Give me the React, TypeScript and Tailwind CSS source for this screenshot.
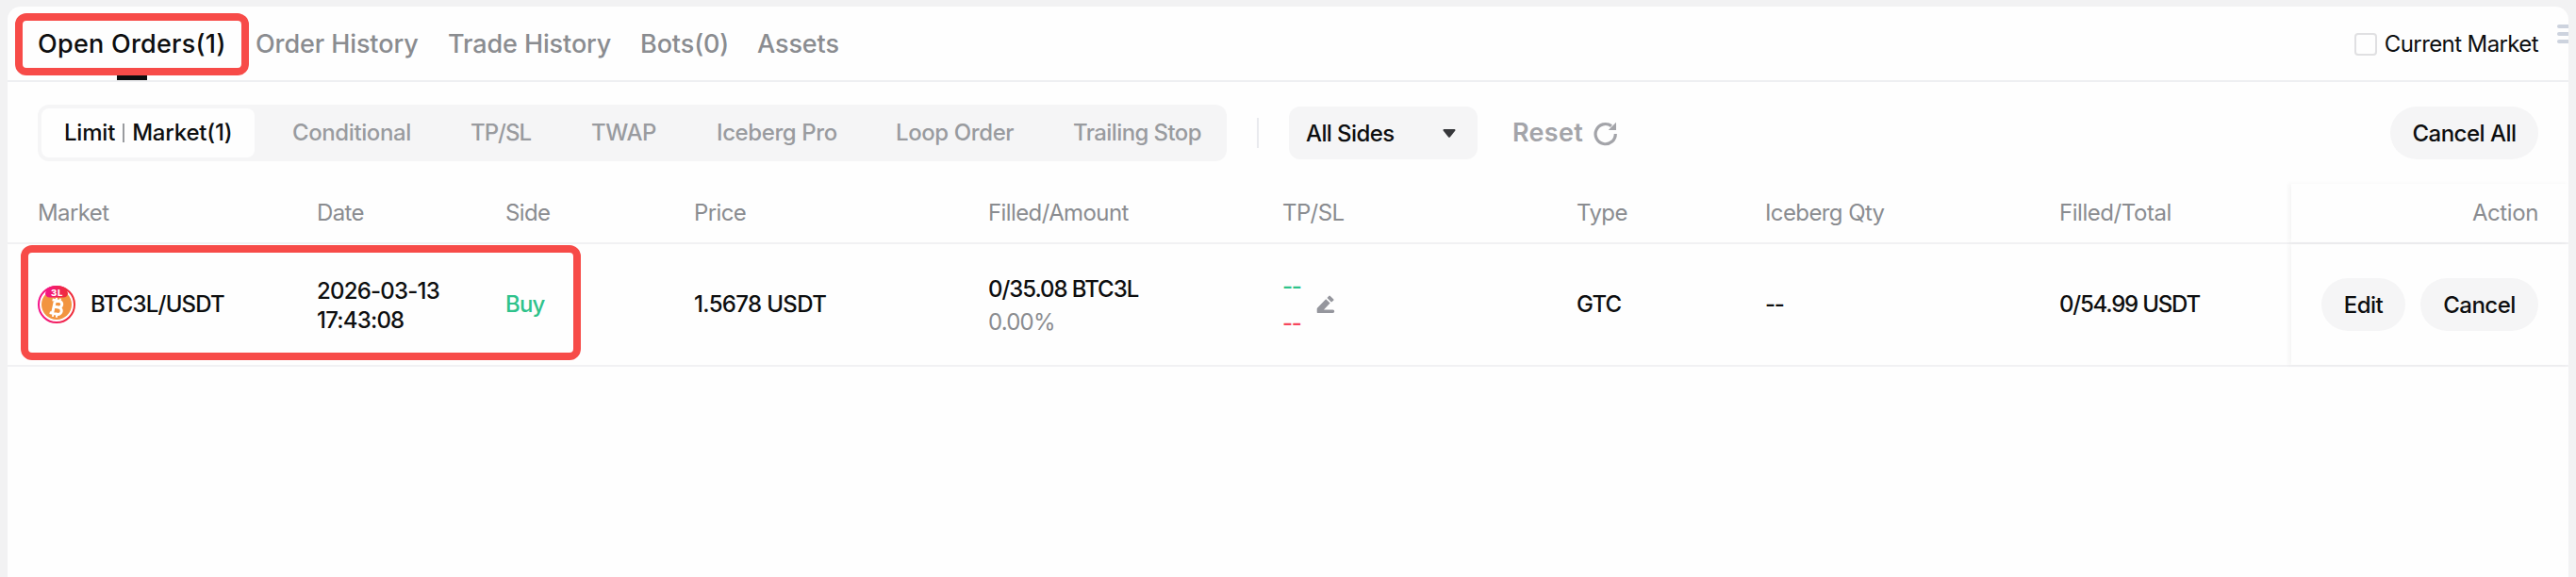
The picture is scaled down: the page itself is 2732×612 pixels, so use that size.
import { clsx } from "clsx";

const tabs = [
  { label: "Order History", width: "w-[204px]" },
  { label: "Trade History", width: "w-[204px]" },
  { label: "Bots(0)", width: "w-[124px]" },
  { label: "Assets", width: "w-[90px]" },
];

const orderKinds = [
  { label: "Conditional", width: "w-[189px]" },
  { label: "TP/SL", width: "w-[128px] tracking-[-1px]" },
  { label: "TWAP", width: "w-[133px]" },
  { label: "Iceberg Pro", width: "w-[190px]" },
  { label: "Loop Order", width: "w-[188px]" },
  { label: "Trailing Stop", width: "w-[148px] tracking-[-0.6px]" },
];

const columns = [
  { label: "Market", width: "w-[296px]" },
  { label: "Date", width: "w-[200px]" },
  { label: "Side", width: "w-[200px]" },
  { label: "Price", width: "w-[312px]" },
  { label: "Filled/Amount", width: "w-[312px]" },
  { label: "TP/SL", width: "w-[312px]" },
  { label: "Type", width: "w-[200px]" },
  { label: "Iceberg Qty", width: "w-[312px]" },
  { label: "Filled/Total", width: "w-[246px] tracking-[-0.45px]" },
];

const CoinIcon = () => (
  <svg className="mr-4 size-10 shrink-0" viewBox="0 0 40 40">
    <defs>
      <linearGradient id="ring" x1="0" x2="1" y1="0" y2="0">
        <stop offset="0" stopColor="#f5138a" />
        <stop offset="1" stopColor="#ee2f36" />
      </linearGradient>
    </defs>
    <circle cx="20" cy="20" r="19" fill="#fff" stroke="url(#ring)" strokeWidth="2" />
    <circle cx="20" cy="20" r="16" fill="#f29440" />
    <g transform="translate(0 1) rotate(12 20 22)" fill="none" stroke="#fff" strokeWidth="3">
      <path d="M14 15h7.700a3.300 3.300 0 0 1 0 6.600h-5M16.500 21.600h5.800a3.700 3.700 0 0 1 0 7.400h-8.300M17 15v14" />
      <path d="M18 12v3M22 12v3M18 29v3.500M22 29v3.500" strokeWidth="2" />
    </g>
    <path d="M10 2.8C16 -.8 24 -.8 30 2.8L32 8a4.500 4.500 0 0 1-4.500 4.500h-15A4.500 4.500 0 0 1 8 8Z" fill="url(#ring)" />
    <text x="20.500" y="10.800" fill="#fff" fontSize="9.500" fontWeight="800" textAnchor="middle" letterSpacing="0.800">
      3L
    </text>
  </svg>
);

const ResetIcon = () => (
  <svg className="ml-[11px] size-[26px]" viewBox="0 0 26 26" fill="none">
    <path d="M23.300 13A10.600 10.600 0 1 1 19 4.600" stroke="#a3a4a9" strokeWidth="3.200" />
    <path d="M24 .800v8.200h-8.200Z" fill="#a3a4a9" />
  </svg>
);

const PencilIcon = () => (
  <svg className="ml-[16px] size-[20px]" viewBox="0 0 20 20" fill="#95969d">
    <path d="M10.200 4.200l4.400 4.400-6.600 6.900h9.500a1.700 1.700 0 0 1 0 3.500H1.500a.8.800 0 0 1-.8-.8v-3.500q0-.8.500-1.300Z" />
    <path d="M11.500 2.900l1.800-2a1 1 0 0 1 1.500 0l3.400 3.400a1 1 0 0 1 0 1.500L16 7.400Z" />
  </svg>
);

const PillButton = ({ label, className }: { label: string; className: string }) => (
  <button
    className={clsx(
      "flex h-14 items-center justify-center rounded-full bg-[#f5f5f6] pt-px text-[24px] font-medium tracking-[-0.5px] text-[#0d0e0f]",
      className
    )}
  >
    {label}
  </button>
);

export default function App() {
  return (
    <div className="h-[612px] w-full overflow-hidden bg-[#f2f2f3] px-2 pt-[7px] font-['Inter','Liberation_Sans',sans-serif] whitespace-nowrap text-[#0d0e0f]">
      <div className="relative h-full rounded-t-[14px] bg-[#fefefe]">
        {/* Tabs */}
        <div className="flex h-20 items-center justify-between border-b-2 border-[#eeeff2] pr-8 pl-8">
          <div className="flex h-full items-center text-[27px] tracking-[-0.1px] text-[#8a8c90]">
            <div className="relative flex h-full w-[231px] items-center pt-0.5 font-medium tracking-[0.25px] text-[#0d0e0f]">
              Open Orders(1)
              <span className="absolute bottom-0 left-[84px] h-[6px] w-8 bg-[#0d0e0f]" />
            </div>
            {tabs.map((tab) => (
              <span key={tab.label} className={clsx("pt-0.5 font-medium", tab.width)}>
                {tab.label}
              </span>
            ))}
          </div>
          <label className="flex items-center gap-2 pt-px text-[24px] tracking-[-0.6px]">
            <span className="size-6 rounded-[4px] border-2 border-[#e0e0e2]" />
            Current Market
          </label>
        </div>

        {/* Filters */}
        <div className="flex h-[108px] items-center pr-8 pl-8">
          <div className="flex h-[60px] w-[1261px] items-center rounded-xl bg-[#f5f5f6] p-1 text-[24px] font-medium tracking-[-0.4px] text-[#999b9f]">
            <div className="mr-10 flex h-[52px] w-[226px] items-center rounded-lg bg-[#fefefe] pl-6 tracking-[-0.2px] text-[#0d0e0f]">
              Limit
              <span className="mx-2 h-5 w-0.5 bg-[#999b9f]" />
              Market(1)
            </div>
            {orderKinds.map((kind) => (
              <span key={kind.label} className={kind.width}>
                {kind.label}
              </span>
            ))}
          </div>
          <div className="ml-8 h-8 w-0.5 bg-[#e9eaee]" />
          <div className="ml-8 flex h-14 w-[200px] items-center justify-between rounded-xl bg-[#f5f5f6] pt-px pr-[23px] pl-[18px] text-[24px] font-medium tracking-[-0.6px]">
            All Sides
            <svg className="h-[9px] w-[14px]" viewBox="0 0 14 9" fill="#37383b">
              <path d="M1.500 0h11q1.500.4.7 1.800L8 8.300q-1 1-2 0L.8 1.800Q0 .4 1.500 0Z" />
            </svg>
          </div>
          <div className="ml-[37px] flex items-center pt-px text-[27px] font-semibold tracking-[0.3px] text-[#a3a4a9]">
            Reset
            <ResetIcon />
          </div>
          <PillButton label="Cancel All" className="ml-auto w-[157px]" />
        </div>

        {/* Column titles */}
        <div className="flex h-16 border-b-2 border-[#f1f1f3] pl-8 text-[24px] tracking-[-0.6px] text-[#8a8c90]">
          {columns.map((column) => (
            <div key={column.label} className={clsx("flex items-center", column.width)}>
              {column.label}
            </div>
          ))}
          <div className="flex flex-1 items-center justify-end pr-8 tracking-[-0.4px] shadow-[-3px_0_5px_rgba(0,0,0,0.04)]">
            Action
          </div>
        </div>

        {/* Order */}
        <div className="flex h-[130px] border-b-2 border-[#f1f1f3] pl-8 text-[24px] font-medium tracking-[-0.8px] *:flex *:items-center">
          <div className="w-[296px]">
            <CoinIcon />
            BTC3L/USDT
          </div>
          <div className="w-[200px] pt-px leading-[31px]">
            2026-03-13
            <br />
            17:43:08
          </div>
          <div className="w-[200px] text-[#2ec28b]">Buy</div>
          <div className="w-[312px] tracking-[-0.65px]">1.5678 USDT</div>
          <div className="w-[312px]">
            <div className="pt-px leading-[35px]">
              <p className="tracking-[-1.05px]">0/35.08 BTC3L</p>
              <p className="font-normal text-[#8a8c90]">0.00%</p>
            </div>
          </div>
          <div className="w-[312px]">
            <div className="leading-[39px] tracking-[-1.3px]">
              <p className="text-[#2ec28b]">--</p>
              <p className="text-[#f6465d]">--</p>
            </div>
            <PencilIcon />
          </div>
          <div className="w-[200px]">GTC</div>
          <div className="w-[312px] tracking-[-1.3px]">--</div>
          <div className="w-[246px] tracking-[-1.2px]">0/54.99 USDT</div>
          <div className="flex-1 justify-end gap-4 pr-8 shadow-[-3px_0_5px_rgba(0,0,0,0.04)]">
            <PillButton label="Edit" className="w-[89px]" />
            <PillButton label="Cancel" className="w-[125px]" />
          </div>
        </div>

        {/* Drawer handle */}
        <div className="absolute top-[19px] right-0 flex w-3 flex-col gap-1">
          <span className="h-1 rounded-l-full bg-[#cdd3de]" />
          <span className="h-1 rounded-l-full bg-[#cdd3de]" />
          <span className="h-1 rounded-l-full bg-[#cdd3de]" />
        </div>

        {/* Highlight frames */}
        <div className="absolute top-[7px] left-2 h-[66px] w-[248px] rounded-xl border-8 border-[#f74b48]" />
        <div className="absolute top-[253px] left-[14px] h-[122px] w-[594px] rounded-xl border-8 border-[#f74b48]" />
      </div>
    </div>
  );
}
